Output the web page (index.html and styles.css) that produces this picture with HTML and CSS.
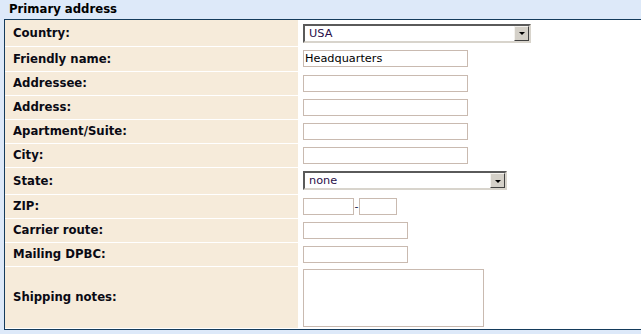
FILE: index.html
```html
<!DOCTYPE html>
<html lang="en">
<head>
  <meta charset="UTF-8">
  <title>Primary address</title>
  <link rel="stylesheet" href="styles.css">
</head>
<body>
  <div class="section-title">Primary address</div>
  <div class="address-box">
    <table class="address-form">
      <tr class="row-select-top">
        <th>Country:</th>
        <td>
          <div class="dropdown dropdown-country">
            <select><option>USA</option></select>
            <span class="dropdown-btn"><span class="arrow"></span></span>
          </div>
        </td>
      </tr>
      <tr class="row-first">
        <th>Friendly name:</th>
        <td><input type="text" class="field field-wide" value="Headquarters"></td>
      </tr>
      <tr>
        <th>Addressee:</th>
        <td><input type="text" class="field field-wide"></td>
      </tr>
      <tr>
        <th>Address:</th>
        <td><input type="text" class="field field-wide"></td>
      </tr>
      <tr>
        <th>Apartment/Suite:</th>
        <td><input type="text" class="field field-wide"></td>
      </tr>
      <tr>
        <th>City:</th>
        <td><input type="text" class="field field-wide"></td>
      </tr>
      <tr class="row-select">
        <th>State:</th>
        <td>
          <div class="dropdown dropdown-state">
            <select><option>none</option></select>
            <span class="dropdown-btn"><span class="arrow"></span></span>
          </div>
        </td>
      </tr>
      <tr>
        <th>ZIP:</th>
        <td>
          <div class="zip">
            <input type="text" class="field field-zip5">
            <span class="zip-dash">-</span>
            <input type="text" class="field field-zip4">
          </div>
        </td>
      </tr>
      <tr>
        <th>Carrier route:</th>
        <td><input type="text" class="field field-short"></td>
      </tr>
      <tr>
        <th>Mailing DPBC:</th>
        <td><input type="text" class="field field-short"></td>
      </tr>
      <tr class="row-notes">
        <th>Shipping notes:</th>
        <td><textarea class="field notes"></textarea></td>
      </tr>
    </table>
  </div>
</body>
</html>
```

FILE: styles.css
```css
* {
  box-sizing: border-box;
}

body {
  margin: 0;
  background-color: #dde9f9;
  font-family: Tahoma, "DejaVu Sans", Verdana, sans-serif;
  font-size: 11px;
  color: #000;
}

.section-title {
  height: 19px;
  padding: 2px 0 0 9px;
  font-weight: bold;
  font-size: 11.7px;
  color: #000000;
}

.address-box {
  margin-left: 4px;
  border-top: 1px solid #143b5c;
  border-left: 1px solid #143b5c;
  border-bottom: 1px solid #143b5c;
  background-color: #ffffff;
  height: 311px;
}

.address-form {
  border-collapse: collapse;
  width: 100%;
}

.address-form th {
  width: 293px;
  height: 24px;
  padding: 0 0 0 8px;
  text-align: left;
  font-weight: bold;
  font-size: 11.7px;
  color: #0a0a14;
  background-color: #f6ebda;
  border-bottom: 1px solid #ffffff;
  vertical-align: middle;
}

.address-form td {
  padding: 0 0 0 5px;
  vertical-align: middle;
  background-color: #ffffff;
}

.row-select-top th {
  height: 26px;
}

.row-first th {
  height: 25px;
}

.row-select th {
  height: 27px;
}

.row-notes th {
  height: 62px;
  border-bottom: none;
}

.field {
  display: block;
  height: 17px;
  border: 1px solid #c9bab0;
  background: #ffffff;
  font-family: Tahoma, "DejaVu Sans", Verdana, sans-serif;
  font-size: 11.3px;
  padding: 0 1px;
  margin: 0;
  color: #000;
  outline: none;
}

.field-wide {
  width: 165px;
}

.field-short {
  width: 105px;
}

.zip {
  display: flex;
  align-items: center;
}

.field-zip5 {
  width: 51px;
}

.zip-dash {
  width: 5px;
  text-align: center;
  font-size: 11px;
  line-height: 11px;
  color: #1a1a4a;
}

.field-zip4 {
  width: 38px;
}

.notes {
  width: 181px;
  height: 58px;
  resize: none;
  margin-top: 1px;
}

.dropdown {
  display: flex;
  height: 19px;
  border-top: 2px solid #5a5a5a;
  border-left: 2px solid #5a5a5a;
  border-bottom: 2px solid #d8d4cc;
  border-right: 2px solid #d8d4cc;
  background: #ffffff;
}

.dropdown-country {
  width: 228px;
}

.dropdown-state {
  width: 204px;
}

.dropdown select {
  appearance: none;
  -webkit-appearance: none;
  flex: 1;
  border: none;
  background: transparent;
  font-family: Tahoma, "DejaVu Sans", Verdana, sans-serif;
  font-size: 11.3px;
  padding: 0 0 0 4px;
  margin: 0;
  color: #2a0f4a;
  outline: none;
}

.dropdown-btn {
  width: 15px;
  background: #d4d0c8;
  border-top: 1px solid #f4f2ee;
  border-left: 1px solid #f4f2ee;
  border-right: 1px solid #404040;
  border-bottom: 1px solid #404040;
  display: flex;
  align-items: center;
  justify-content: center;
}

.arrow {
  width: 0;
  height: 0;
  border-left: 3px solid transparent;
  border-right: 3px solid transparent;
  border-top: 3px solid #000000;
  margin-top: 1px;
}
```
